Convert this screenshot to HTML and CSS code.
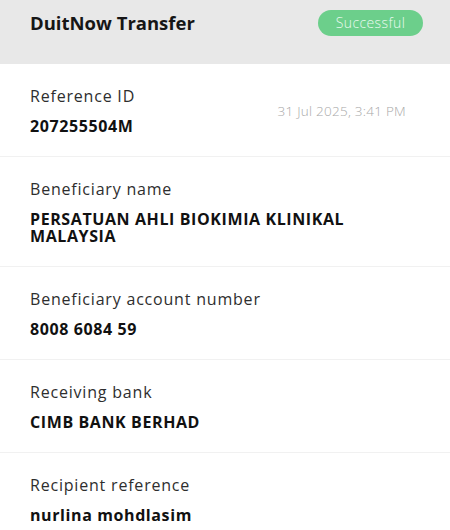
FILE: index.html
```html
<!DOCTYPE html>
<html lang="en">
<head>
  <meta charset="UTF-8">
  <meta name="viewport" content="width=device-width, initial-scale=1.0">
  <title>DuitNow Transfer</title>
  <link rel="stylesheet" href="styles.css">
</head>
<body>
  <div class="header">
    <h1 class="title">DuitNow Transfer</h1>
    <span class="status">Successful</span>
  </div>

  <div class="row row-split">
    <div>
      <div class="label">Reference ID</div>
      <div class="value">207255504M</div>
    </div>
    <div class="date">31 Jul 2025, 3:41 PM</div>
  </div>

  <div class="row">
    <div class="label">Beneficiary name</div>
    <div class="value">PERSATUAN AHLI BIOKIMIA KLINIKAL MALAYSIA</div>
  </div>

  <div class="row">
    <div class="label">Beneficiary account number</div>
    <div class="value">8008 6084 59</div>
  </div>

  <div class="row">
    <div class="label">Receiving bank</div>
    <div class="value">CIMB BANK BERHAD</div>
  </div>

  <div class="row">
    <div class="label">Recipient reference</div>
    <div class="value">nurlina mohdlasim</div>
  </div>
</body>
</html>
```

FILE: styles.css
```css
body {
  margin: 0;
  background: #fff;
  font-family: "Open Sans", "Liberation Sans", sans-serif;
  color: #1a1a1a;
}

.header {
  height: 64px;
  box-sizing: border-box;
  background: #e8e8e8;
  display: flex;
  justify-content: space-between;
  align-items: flex-start;
  padding: 10px 27px 0 30px;
}

.title {
  margin: 0;
  font-size: 18.5px;
  line-height: 26px;
  font-weight: 700;
  color: #161616;
}

.status {
  height: 26px;
  width: 105px;
  border-radius: 13px;
  background: #6ccf8b;
  color: #eafaf0;
  font-size: 14px;
  letter-spacing: 0.4px;
  line-height: 26px;
  text-align: center;
  font-weight: 300;
}

.row {
  padding: 22px 60px 21px 30px;
  border-bottom: 1px solid #f1f1f1;
}

.row-split {
  display: flex;
  justify-content: space-between;
  align-items: center;
  padding-right: 44px;
}

.label {
  font-size: 16px;
  letter-spacing: 0.8px;
  line-height: 20px;
  color: #2e2e2e;
  margin-bottom: 12px;
}

.value {
  font-size: 16px;
  letter-spacing: 0.6px;
  line-height: 17px;
  font-weight: 700;
  color: #111;
}

.date {
  font-size: 13.5px;
  letter-spacing: 0.25px;
  font-weight: 300;
  color: #a9a9a9;
}
```
